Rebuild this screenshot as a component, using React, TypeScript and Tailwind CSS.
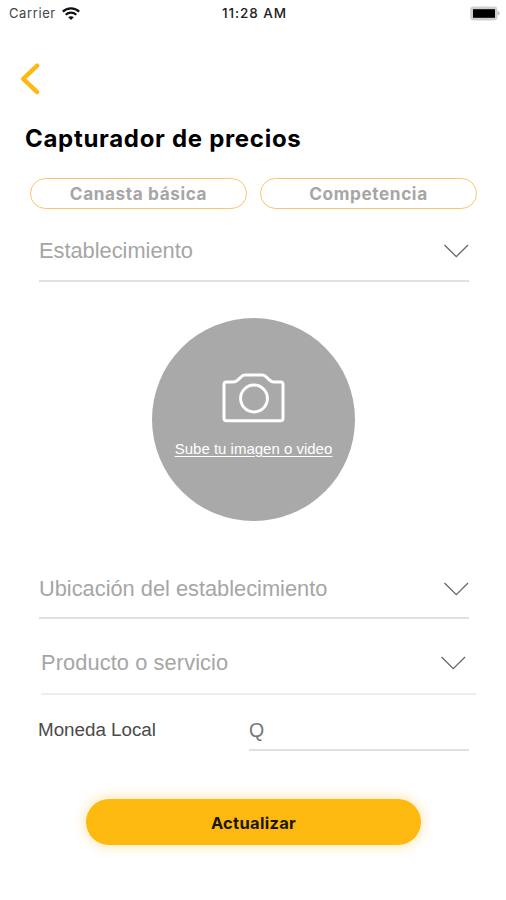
import clsx from "clsx";

function WifiIcon() {
  return (
    <svg width="18" height="13" viewBox="0 0 18 13" fill="none" stroke="#111" strokeWidth="2.2">
      <path d="M0.8 4.6C5.4 0.2 12.6 0.2 17.2 4.6" />
      <path d="M3.7 7.8C6.7 5 11.3 5 14.3 7.8" />
      <path d="M9 12.9L6.2 10.2C7.8 8.8 10.2 8.8 11.8 10.2Z" fill="#111" stroke="none" />
    </svg>
  );
}

function BatteryIcon() {
  return (
    <svg width="30" height="15" viewBox="0 0 30 15">
      <rect x="0.2" y="0.4" width="27.3" height="14" rx="3.4" fill="#cfcfcf" />
      <rect x="3" y="3.2" width="22" height="8.6" fill="#000" />
      <path d="M27.6 5C29 5.6 29.6 6.4 29.6 7.3C29.6 8.2 29 9 27.6 9.6Z" fill="#b8b8b8" />
    </svg>
  );
}

function ChevronDown() {
  return (
    <svg width="26" height="14" viewBox="0 0 26 14" fill="none" stroke="#666" strokeWidth="1.3">
      <path d="M1.5 1L13.3 12.6L25 1" />
    </svg>
  );
}

function CameraIcon() {
  return (
    <svg
      width="63"
      height="50"
      viewBox="0 0 63 50"
      fill="none"
      stroke="#fff"
      strokeWidth="3"
      strokeLinejoin="round"
    >
      <path d="M4.5 9H11.5C13.5 9 14.6 8.2 16.2 6.6L19.2 3.8C20.5 2.5 21.6 2 23.3 2H40C41.7 2 42.8 2.5 44.1 3.8L47.1 6.6C48.7 8.2 49.8 9 51.8 9H58.5Q61 9 61 11.5V45.2Q61 47.7 58.5 47.7H4.5Q2 47.7 2 45.2V11.5Q2 9 4.5 9Z" />
      <circle cx="32" cy="25.5" r="13.4" />
    </svg>
  );
}

type SelectProps = {
  label: string;
  className?: string;
};

function SelectField({ label, className }: SelectProps) {
  return (
    <button
      className={clsx(
        "flex items-start justify-between border-b-2 text-left text-[21.8px] leading-6 text-[#a6a6a6]",
        className
      )}
    >
      <span>{label}</span>
      <span className="pt-[5px]">
        <ChevronDown />
      </span>
    </button>
  );
}

export default function App() {
  return (
    <div className="flex h-[900px] w-[506px] flex-col bg-white font-['Liberation_Sans',sans-serif]">
      <header className="grid h-[26px] grid-cols-3 items-center pr-[6px] pl-[9px] font-['Inter',sans-serif] text-[13px]">
        <div className="flex items-center gap-[6px] text-[#444]">
          <span className="pt-0.5 tracking-[0.6px]">Carrier</span>
          <WifiIcon />
        </div>
        <span className="text-center text-[13.5px] font-medium tracking-[0.9px] text-[#222]">
          11:28 AM
        </span>
        <div className="flex justify-end">
          <BatteryIcon />
        </div>
      </header>

      <button className="mt-9 ml-5 h-[34px] w-[22px]">
        <svg
          width="22"
          height="34"
          viewBox="0 0 22 34"
          fill="none"
          stroke="#fdb813"
          strokeWidth="4.4"
          strokeLinecap="round"
          strokeLinejoin="round"
        >
          <path d="M17.2 3.7L3.2 16.9L17.2 30.1" />
        </svg>
      </button>

      <h1 className="mt-[27px] ml-[25px] h-8 font-['Inter',sans-serif] text-[24px] leading-8 font-bold tracking-[0.7px] whitespace-nowrap text-black">
        Capturador de precios
      </h1>

      <div className="mt-[23px] ml-[30px] flex gap-[13px] font-['Inter',sans-serif] text-[17.2px] font-bold tracking-[0.6px] text-[#a6a6a6]">
        <button className="h-[31px] w-[217px] rounded-full border-[1.5px] border-[#fdc56b] pt-px">
          Canasta básica
        </button>
        <button className="h-[31px] w-[217px] rounded-full border-[1.5px] border-[#fdc56b] pt-px">
          Competencia
        </button>
      </div>

      <SelectField
        label="Establecimiento"
        className="mt-[30px] ml-[39px] h-[43px] w-[430px] border-[#e0e0e0]"
      />

      <button className="mt-9 ml-[152px] flex size-[203px] flex-col items-center rounded-full bg-[#a9a9a9] pt-[55px] text-white">
        <CameraIcon />
        <span className="mt-4 text-[15px] leading-5 whitespace-nowrap underline underline-offset-2">
          Sube tu imagen o video
        </span>
      </button>

      <SelectField
        label="Ubicación del establecimiento"
        className="mt-[56px] ml-[39px] h-[42px] w-[430px] border-[#e0e0e0]"
      />
      <SelectField
        label="Producto o servicio"
        className="mt-8 ml-[41px] h-[44px] w-[435px] border-[#ededed] pr-[10px] tracking-[0.1px]"
      />

      <div className="mt-[23px] ml-[38px] flex h-[33px] w-[431px] leading-6">
        <label className="w-[211px] text-[18.8px] text-[#4a4a4a]">Moneda Local</label>
        <div className="flex-1 border-b-2 border-[#e0e0e0] text-[19.5px] text-[#777]">Q</div>
      </div>

      <button className="mt-[48px] ml-[86px] h-[46px] w-[335px] rounded-full bg-[#fdb90f] pt-0.5 font-['Inter',sans-serif] text-[16.5px] font-bold tracking-[0.3px] text-[#1c1605] shadow-[0_0_12px_3px_#fdebc2]">
        Actualizar
      </button>
    </div>
  );
}
